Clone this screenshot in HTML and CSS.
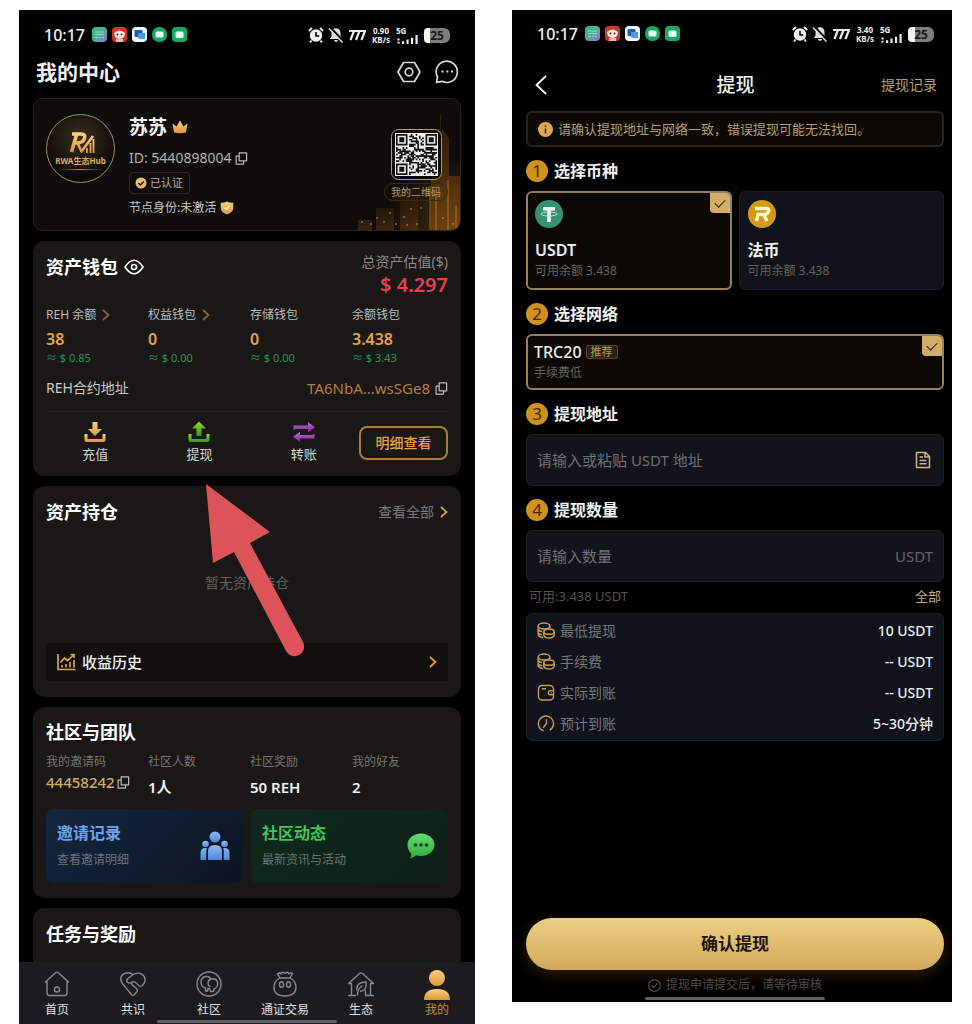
FILE: index.html
```html
<!DOCTYPE html>
<html lang="zh-CN">
<head>
    <meta charset="UTF-8">
    <meta name="viewport" content="width=device-width, initial-scale=1.0">
    <title>提现教程</title>
    <link rel="stylesheet" href="styles.css">
</head>
<body>
    <!-- 公用图标 -->
    <svg class="sprite" aria-hidden="true">
        <defs>
            <linearGradient id="gold" x1="0" y1="0" x2="0" y2="1">
                <stop offset="0" stop-color="#fbd07e"/><stop offset="1" stop-color="#dc963a"/>
            </linearGradient>
            <linearGradient id="lime" x1="0" y1="0" x2="0" y2="1">
                <stop offset="0" stop-color="#8fdc1c"/><stop offset="1" stop-color="#3f8f2e"/>
            </linearGradient>
            <linearGradient id="purple" x1="0" y1="0" x2="0" y2="1">
                <stop offset="0" stop-color="#b86bd0"/><stop offset="1" stop-color="#8a1fa8"/>
            </linearGradient>
            <linearGradient id="blue" x1="0" y1="0" x2="0" y2="1">
                <stop offset="0" stop-color="#8fbcf8"/><stop offset="1" stop-color="#4d86dc"/>
            </linearGradient>
            <linearGradient id="green" x1="0" y1="0" x2="0" y2="1">
                <stop offset="0" stop-color="#62dd6c"/><stop offset="1" stop-color="#2fae3f"/>
            </linearGradient>
            <linearGradient id="app" x1="0" y1="0" x2="1" y2="1">
                <stop offset="0" stop-color="#2fbf7c"/><stop offset=".5" stop-color="#4fae9a"/><stop offset="1" stop-color="#a06ad8"/>
            </linearGradient>
        </defs>
        <symbol id="i-apps" viewBox="0 0 95 16">
            <rect x="0" y="0" width="15" height="15" rx="4" fill="url(#app)"/>
            <path d="M3 5h9M3 7.5h9M3 10.5h3M7 10.5h2M10 10.5h2" stroke="#c9f3e4" stroke-width="1.2" opacity=".6"/>
            <rect x="20" y="0" width="15" height="15" rx="4" fill="#d5342b"/>
            <path d="M22 6q5.5-5 11 0l-1 4q-4.5 4-9 0z" fill="#fff0e4"/>
            <circle cx="25.5" cy="7.5" r="1" fill="#6b1a14"/><circle cx="29.5" cy="7.5" r="1" fill="#6b1a14"/>
            <path d="M24 12h7v3h-7z" fill="#f4b9a6"/>
            <rect x="40" y="0" width="15" height="15" rx="4" fill="#f4f8fc"/>
            <rect x="42.5" y="3" width="8" height="7" rx="1" fill="#1c5fae"/>
            <path d="M46 6h7v6h-5l-2-1z" fill="#4d9be0"/>
            <rect x="60" y="0" width="15" height="15" rx="7" fill="#17a862"/>
            <rect x="63.5" y="4.5" width="8" height="6" rx="1.5" fill="#eafff3"/>
            <rect x="80" y="0" width="15" height="15" rx="4" fill="#17a862"/>
            <rect x="83.5" y="4.5" width="8" height="6.5" rx="1.5" fill="#eafff3"/>
        </symbol>
        <symbol id="i-alarm" viewBox="0 0 16 16">
            <circle cx="8" cy="8.5" r="6.2" fill="#eee"/>
            <path d="M.8 4L4 1M15.2 4L12 1M3.5 13.5l-1.5 2M12.5 13.5l1.5 2" stroke="#eee" stroke-width="1.8"/>
            <path d="M8 5v4h3.2" fill="none" stroke="#000" stroke-width="1.6"/>
        </symbol>
        <symbol id="i-mute" viewBox="0 0 16 16">
            <path d="M8 1.2c3 0 4.5 2 4.5 5v3.3l1.8 2.5H1.7l1.8-2.5V6.2c0-3 1.5-5 4.5-5zM6 13h4q-.5 2-2 2t-2-2z" fill="#ddd"/>
            <path d="M2.5.5l13 14" stroke="#000" stroke-width="2"/>
            <path d="M1 1.5l13.5 14" stroke="#ddd" stroke-width="1.5"/>
        </symbol>
        <symbol id="i-fast" viewBox="0 0 18 12">
            <path d="M1 2h5L2.5 11M6.5 2h5L8 11M12 2h5l-3.5 9" fill="none" stroke="#eee" stroke-width="2.2"/>
        </symbol>
        <symbol id="i-bars" viewBox="0 0 24 10">
            <path d="M1.5 4v2M1.5 7.5v2M6.5 7v3M11.5 5v5M16.5 3v7M21.5 0v10" stroke="#eee" stroke-width="2.4"/>
        </symbol>
        <symbol id="i-copy" viewBox="0 0 14 14">
            <path d="M4.5 1h8v8.5h-8zM4.5 4.5H1.2V13h8V9.5" fill="none" stroke="currentColor" stroke-width="1.3" stroke-linejoin="round"/>
        </symbol>
        <symbol id="i-next" viewBox="0 0 8 14">
            <path d="M1 2l5.5 5L1 12" fill="none" stroke="currentColor" stroke-width="1.7"/>
        </symbol>
        <symbol id="i-coins" viewBox="0 0 18 17">
            <ellipse cx="7" cy="4" rx="5.8" ry="3"/>
            <path d="M1.2 4v9q1.2 2.5 5 2.5M1.2 7.5q1.2 2 4 2M1.2 11q1.2 1.7 4 1.7M12.8 4v2.5"/>
            <ellipse cx="12" cy="9.7" rx="5.2" ry="2.6"/>
            <path d="M6.8 9.7v3.5q1 2.8 5.2 2.8t5.2-2.8V9.7"/>
        </symbol>
    </svg>

    <main class="board">
        <!-- 左：我的中心 -->
        <section class="phone">
            <div class="status">
                <span class="time">10:17</span>
                <svg class="apps"><use href="#i-apps"/></svg>
                <div class="signals">
                    <svg class="s16"><use href="#i-alarm"/></svg>
                    <svg class="s16"><use href="#i-mute"/></svg>
                    <svg class="fast"><use href="#i-fast"/></svg>
                    <span class="speed">0.90<br>KB/s</span>
                    <span class="net">5G<svg><use href="#i-bars"/></svg></span>
                    <span class="battery">25</span>
                </div>
            </div>

            <header class="home-head">
                <h1>我的中心</h1>
                <button class="icon-btn" aria-label="设置">
                    <svg width="24" height="24" viewBox="0 0 24 24" fill="none" stroke="#d8d8d8" stroke-width="1.7" stroke-linejoin="round">
                        <path d="M6.5 2.5h11L23 12l-5.5 9.5h-11L1 12z"/><circle cx="12" cy="12" r="3.8"/>
                    </svg>
                </button>
                <button class="icon-btn" aria-label="消息">
                    <svg width="24" height="24" viewBox="0 0 24 24" fill="none" stroke="#d8d8d8" stroke-width="1.7" stroke-linejoin="round">
                        <path d="M2.5 17a10.6 10.6 0 1 1 4.5 4.3L1.5 22.3z"/>
                        <path d="M6.5 11.5h2M11.3 11.5h2M16 11.5h2" stroke-width="2.2"/>
                    </svg>
                </button>
            </header>

            <div class="stack">
                <section class="card profile">
                    <svg class="city" viewBox="0 0 130 120" aria-hidden="true">
                        <defs>
                            <linearGradient id="tower" x1="0" y1="0" x2="0" y2="1">
                                <stop offset="0" stop-color="#6a3d0c" stop-opacity=".35"/><stop offset="1" stop-color="#8a5212" stop-opacity=".6"/>
                            </linearGradient>
                            <linearGradient id="block" x1="0" y1="0" x2="0" y2="1">
                                <stop offset="0" stop-color="#4a2c0a" stop-opacity=".1"/><stop offset="1" stop-color="#7a4810" stop-opacity=".4"/>
                            </linearGradient>
                            <radialGradient id="glow" cx="1" cy="1" r="1">
                                <stop offset="0" stop-color="#8a5210" stop-opacity=".5"/><stop offset=".6" stop-color="#8a5210" stop-opacity="0"/>
                            </radialGradient>
                        </defs>
                        <rect width="130" height="120" fill="url(#glow)"/>
                        <path d="M101 120V24l12-4 6 8v92zM110 20V4h1v16zM119 120V66h11v54z" fill="url(#tower)"/>
                        <path d="M70 120V78h18v42zM46 120V98h18v22zM28 120v-10h14v10z" fill="url(#block)"/>
                        <path d="M100 120V76M118 120V70M106 120V84M126 120V96" stroke="#d99b3e" opacity=".6"/>
                        <g fill="#dd9b48" opacity=".6">
                            <circle cx="32" cy="112" r="1"/><circle cx="41" cy="114" r="1"/><circle cx="47" cy="108" r="1"/><circle cx="54" cy="112" r="1"/>
                            <circle cx="60" cy="103" r="1"/><circle cx="66" cy="114" r="1"/><circle cx="74" cy="107" r="1"/><circle cx="81" cy="99" r="1"/><circle cx="87" cy="114" r="1"/>
                            <circle cx="91" cy="98" r="1"/><circle cx="77" cy="115" r="1"/><circle cx="113" cy="108" r="1"/><circle cx="123" cy="114" r="1"/>
                        </g>
                    </svg>
                    <div class="avatar">
                        <svg viewBox="0 0 28 24" width="28" height="24" fill="none" stroke="url(#gold)" stroke-linejoin="round">
                            <path d="M5 3h9q5 0 3.500 4.500T9.500 12H6M9.500 4L4.500 21" stroke-width="3.6"/>
                            <path d="M10.5 12l4 8.500L26 5" stroke-width="2.6"/>
                            <path d="M20 17v5M23.5 12v10M26.500 8v14" stroke-width="1.8"/>
                        </svg>
                        <span>RWA生态Hub</span>
                        <i></i>
                    </div>
                    <div class="who">
                        <h2>苏苏
                            <svg width="16" height="14" viewBox="0 0 16 14"><path d="M.5 3.5l4 3L8 .5l3.5 6 4-3L14 12.5q-6 1.5-12 0z" fill="url(#gold)"/></svg>
                        </h2>
                        <p class="uid">ID: 5440898004 <svg class="copy"><use href="#i-copy"/></svg></p>
                        <span class="verified">
                            <svg width="12" height="12" viewBox="0 0 12 12"><circle cx="6" cy="6" r="5.5" fill="#edbb62"/><path d="M3.3 6l2 2 3.500-3.500" fill="none" stroke="#1d1505" stroke-width="1.5"/></svg>
                            已认证
                        </span>
                        <p class="node">节点身份:未激活
                            <svg width="14" height="14" viewBox="0 0 14 14"><path d="M7 .5q3 1.5 6.3 1.3V7q0 4-6.3 6.5Q.7 11 .7 7V1.800Q4 2 7 .5z" fill="url(#gold)"/><path d="M4.5 6.500L6.500 8.500l3.500-4" fill="none" stroke="#fff0c4" stroke-width="1.3"/></svg>
                        </p>
                    </div>
                    <div class="qr">
                        <svg id="qr" width="51" height="51" viewBox="-5 -5 51 51" role="img" aria-label="二维码"></svg>
                        <span>我的二维码</span>
                    </div>
                </section>

                <section class="card wallet">
                    <div class="wallet-head">
                        <h3>资产钱包
                            <svg width="20" height="16" viewBox="0 0 20 16" fill="none" stroke="#fff" stroke-width="1.6"><path d="M1 8q9-13.5 18 0-9 13.5-18 0z"/><circle cx="10" cy="8" r="2.5"/></svg>
                        </h3>
                        <div class="total">
                            <span>总资产估值($)</span>
                            <strong>$ 4.297</strong>
                        </div>
                    </div>
                    <div class="quad">
                        <div><span class="name">REH 余额 <svg class="next"><use href="#i-next"/></svg></span><b>38</b><em>≈ $ 0.85</em></div>
                        <div><span class="name">权益钱包 <svg class="next"><use href="#i-next"/></svg></span><b>0</b><em>≈ $ 0.00</em></div>
                        <div><span class="name">存储钱包</span><b>0</b><em>≈ $ 0.00</em></div>
                        <div><span class="name">余额钱包</span><b>3.438</b><em>≈ $ 3.43</em></div>
                    </div>
                    <div class="contract">
                        <span>REH合约地址</span>
                        <span class="addr">TA6NbA...wsSGe8</span>
                        <svg class="copy"><use href="#i-copy"/></svg>
                    </div>
                    <div class="actions">
                        <button>
                            <svg width="22" height="22" viewBox="0 0 22 22" fill="url(#gold)"><path d="M8.5 1h5v7H18l-7 7-7-7h4.500z"/><path d="M.5 13h3v5h15v-5h3v6q0 2-2 2h-17q-2 0-2-2z"/></svg>
                            充值
                        </button>
                        <button>
                            <svg width="22" height="22" viewBox="0 0 22 22" fill="url(#lime)"><path d="M11 .5l7 7h-4.500V15h-5V7.500H4z"/><path d="M.5 13h3v5h15v-5h3v6q0 2-2 2h-17q-2 0-2-2z"/></svg>
                            提现
                        </button>
                        <button>
                            <svg width="22" height="22" viewBox="0 0 22 22" fill="url(#purple)"><path d="M.5 9.500V4.500H15V1l7 5.200-7 5V8H3.500q-2 0-3 1.500z"/><path d="M21.5 12.500V17.500H7V21l-7-5.200 7-5V14h11.500q2 0 3-1.500z"/></svg>
                            转账
                        </button>
                        <button class="detail">明细查看</button>
                    </div>
                </section>

                <section class="card holdings">
                    <div class="row">
                        <h3>资产持仓</h3>
                        <a href="#" class="all">查看全部 <svg class="next"><use href="#i-next"/></svg></a>
                    </div>
                    <p class="empty">暂无资产持仓</p>
                    <a href="#" class="history">
                        <svg width="19" height="18" viewBox="0 0 19 18" fill="none" stroke="#d9a441" stroke-width="1.7"><path d="M1 1v15.500h17.500M3.500 9.500l4-4.500 3 2.500L17 1.500M13.500 1.500H17V5M5 14.500V12M9 14.500V11M13 14.500V9M17 14.500V7"/></svg>
                        收益历史
                        <svg class="next"><use href="#i-next"/></svg>
                    </a>
                    <!-- 指向“提现”的箭头 -->
                    <svg class="pointer" viewBox="0 0 100 174" aria-hidden="true">
                        <path d="M0 0l64 48-20 11 53 99a9.500 9.500 0 0 1-17 9L28 68 7 79z" fill="#dc545a"/>
                    </svg>
                </section>

                <section class="card community">
                    <h3>社区与团队</h3>
                    <div class="quad stats">
                        <div><span class="name">我的邀请码</span><b class="code">44458242<svg class="copy"><use href="#i-copy"/></svg></b></div>
                        <div><span class="name">社区人数</span><b>1人</b></div>
                        <div><span class="name">社区奖励</span><b>50 REH</b></div>
                        <div><span class="name">我的好友</span><b>2</b></div>
                    </div>
                    <div class="tiles">
                        <a href="#" class="tile invite">
                            <span><strong>邀请记录</strong>查看邀请明细</span>
                            <svg width="30" height="30" viewBox="0 0 30 30" fill="url(#blue)"><circle cx="15" cy="6" r="5.5"/><circle cx="5.5" cy="13" r="3.3"/><circle cx="24.5" cy="13" r="3.3"/><path d="M8 29V20q0-6 7-6t7 6v9zM.5 29v-7q0-4.500 4-5h2.300l-.5 3v9zM29.500 29v-7q0-4.500-4-5h-2.300l.5 3v9z"/></svg>
                        </a>
                        <a href="#" class="tile news">
                            <span><strong>社区动态</strong>最新资讯与活动</span>
                            <svg width="28" height="26" viewBox="0 0 28 26"><path d="M14 .5c7.500 0 13.500 5 13.500 11.200S21.500 23 14 23q-2.500 0-4.800-.7Q6.500 25 2.800 25.500q1.800-2 1.500-4.800Q.5 17 .5 11.700C.5 5.500 6.500.5 14 .5z" fill="url(#green)"/><g fill="#0d3a1c"><circle cx="8.500" cy="12" r="1.8"/><circle cx="14" cy="12" r="1.8"/><circle cx="19.500" cy="12" r="1.8"/></g></svg>
                        </a>
                    </div>
                </section>

                <section class="card tasks">
                    <h3>任务与奖励</h3>
                </section>
            </div>

            <nav class="tabs">
                <a href="#"><svg viewBox="0 0 26 26"><path d="M1 11.500L11.500 1.700q1.500-1.200 3 0L25 11.500M3 9.800V22q0 2.500 2.500 2.500h15Q23 24.500 23 22V9.800"/><circle cx="13" cy="18.500" r="2.5"/></svg>首页</a>
                <a href="#"><svg viewBox="0 0 26 26"><path d="M13 3.500Q9 .5 4.500 2.500T1 9.500q.5 2.500 3 5l7.500 9q1.500 1.500 3 0l2.500-3q1-1.500-.5-3l-4.500-4q-1-1.500.5-2.500t3 .5l4 3.500q1.500 1 3-.5l1.500-2q2.500-5-1-8.500T13 3.500L7.500 8q-1.500 2 .5 3.500t4-.5"/></svg>共识</a>
                <a href="#"><svg viewBox="0 0 26 26"><circle cx="13" cy="13" r="12"/><path d="M9.500 20v-3q-4-1-4.500-5.500Q5 6.500 9.500 5.500q4.500-.5 5.500 2.500 5.500-1 6.500 3.500t-3.500 6.500l-.5 2.500h-3l-1-3h-1.500l-.5 2.500zM15 8q-4 1.500-2.500 6.500l2 1"/></svg>社区</a>
                <a href="#"><svg viewBox="0 0 26 26"><path d="M8 7L5.500 2.500q2-1 3.500.3 1-2 2.500-1.300l1.500 1 1.500-1q1.500-.7 2.500 1.300 1.500-1.300 3.500-.3L18 7M7.500 7h11q5.500 3.500 5.500 9 0 9-11 9T2 16q0-5.500 5.500-9z"/><ellipse cx="9.500" cy="13.500" rx="2" ry="2.800"/><ellipse cx="16.500" cy="13.500" rx="2" ry="2.800"/></svg>通证交易</a>
                <a href="#"><svg viewBox="0 0 26 26"><path d="M3.500 24.500V12.500H.5L11.500 2.500q1.500-1.200 3 0l11 10h-3v12M0 24.500h8M17 24.500h9M9.500 24.500q-.5-6 5-10M9 19.500q-1.500-8 9-8.500 1 9-6 9.500M17.500 24.500V19"/></svg>生态</a>
                <a href="#" class="active"><svg viewBox="0 0 26 30"><circle cx="13" cy="8" r="8"/><path d="M0 30q0-11 13-11t13 11z"/></svg>我的</a>
                <i class="home-bar"></i>
            </nav>
        </section>

        <!-- 右：提现 -->
        <section class="phone withdraw">
            <div class="status">
                <span class="time">10:17</span>
                <svg class="apps"><use href="#i-apps"/></svg>
                <div class="signals">
                    <svg class="s16"><use href="#i-alarm"/></svg>
                    <svg class="s16"><use href="#i-mute"/></svg>
                    <svg class="fast"><use href="#i-fast"/></svg>
                    <span class="speed">3.40<br>KB/s</span>
                    <span class="net">5G<svg><use href="#i-bars"/></svg></span>
                    <span class="battery">25</span>
                </div>
            </div>

            <header class="page-head">
                <button class="icon-btn" aria-label="返回"><svg width="14" height="20" viewBox="0 0 14 20" fill="none" stroke="#fff" stroke-width="1.8"><path d="M12 1L2.500 10l9.500 9"/></svg></button>
                <h1>提现</h1>
                <a href="#">提现记录</a>
            </header>

            <form class="form">
                <p class="notice">
                    <svg width="15" height="15" viewBox="0 0 15 15"><circle cx="7.500" cy="7.500" r="7.500" fill="#dca950"/><path d="M7.500 6.500v5M7.500 3.500v1.700" stroke="#5a3a08" stroke-width="1.7"/></svg>
                    请确认提现地址与网络一致，错误提现可能无法找回。
                </p>

                <h2 class="step"><i>1</i>选择币种</h2>
                <div class="coins">
                    <label class="option">
                        <input type="radio" name="coin" checked>
                        <svg width="28" height="28" viewBox="0 0 28 28"><circle cx="14" cy="14" r="14" fill="#35946f"/><path d="M8 7h12v3.500h-4.200V22h-3.600V10.500H8z" fill="#fff"/><ellipse cx="14" cy="14" rx="8" ry="2" fill="none" stroke="#bfe6d6"/></svg>
                        <strong>USDT</strong>
                        <small>可用余额 3.438</small>
                    </label>
                    <label class="option">
                        <input type="radio" name="coin">
                        <svg width="28" height="28" viewBox="0 0 28 28"><circle cx="14" cy="14" r="14" fill="#d39a18"/><path d="M7 8.500h11q3.500 0 2.500 3t-4.500 3H10M15.500 14.500l3.500 6.500M10.500 13L8.500 21" fill="none" stroke="#fff8cf" stroke-width="3.4"/></svg>
                        <strong>法币</strong>
                        <small>可用余额 3.438</small>
                    </label>
                </div>

                <h2 class="step"><i>2</i>选择网络</h2>
                <label class="option network">
                    <input type="radio" name="network" checked>
                    <strong>TRC20 <mark>推荐</mark></strong>
                    <small>手续费低</small>
                </label>

                <h2 class="step"><i>3</i><label for="address">提现地址</label></h2>
                <div class="field">
                    <input type="text" id="address" placeholder="请输入或粘贴 USDT 地址">
                    <button type="button" class="icon-btn" aria-label="粘贴"><svg width="16" height="18" viewBox="0 0 16 18" fill="none" stroke="#cdb488" stroke-width="1.5" stroke-linejoin="round"><path d="M1.500 1.500h9l4 4v11h-13zM10 1.500V6h4.500M4.500 6H8M4.500 9.500h7M4.500 12.800h7"/></svg></button>
                </div>

                <h2 class="step"><i>4</i><label for="amount">提现数量</label></h2>
                <div class="field">
                    <input type="text" id="amount" placeholder="请输入数量">
                    <span>USDT</span>
                </div>
                <div class="avail">
                    <span>可用:3.438 USDT</span>
                    <button type="button">全部</button>
                </div>

                <dl class="summary">
                    <div><dt><svg><use href="#i-coins"/></svg>最低提现</dt><dd>10 USDT</dd></div>
                    <div><dt><svg><use href="#i-coins"/></svg>手续费</dt><dd>-- USDT</dd></div>
                    <div><dt><svg viewBox="0 0 18 18"><rect x="1" y="1.5" width="16" height="15.5" rx="4"/><path d="M4.500 5H9M17 7h-3.500q-2 0-2 2.200t2 2.200H17M14 9.200h1"/></svg>实际到账</dt><dd>-- USDT</dd></div>
                    <div><dt><svg viewBox="0 0 18 18"><path d="M6.500 16.700A8 8 0 1 1 13 16M9.500 4.500V9L6 13.500"/></svg>预计到账</dt><dd>5~30分钟</dd></div>
                </dl>

                <button type="button" class="submit">确认提现</button>
                <p class="tip">
                    <svg width="13" height="13" viewBox="0 0 13 13" fill="none" stroke="#555" stroke-width="1.1"><circle cx="6.500" cy="6.500" r="5.8"/><path d="M3.800 6.500l2 2 3.500-3.800"/></svg>
                    提现申请提交后，请等待审核
                </p>
                <i class="home-bar"></i>
            </form>
        </section>
    </main>

    <script>
        // 二维码：三个定位角 + 伪随机模块
        const size = 25;
        const unit = 41 / size;
        let seed = 7;

        function finder(x, y, cx, cy) {
            const d = Math.max(Math.abs(x - cx), Math.abs(y - cy));
            if (d > 4) return null;
            return d !== 2 && d !== 4;
        }

        let d = '';
        for (let y = 0; y < size; y++) {
            for (let x = 0; x < size; x++) {
                seed = (seed * 1103515245 + 12345) % 2147483648;
                let dark = seed / 2147483648 > 0.45;
                for (const c of [[3, 3], [size - 4, 3], [3, size - 4]]) {
                    const f = finder(x, y, c[0], c[1]);
                    if (f !== null) dark = f;
                }
                if (dark) d += `M${x * unit} ${y * unit}h${unit}v${unit}h${-unit}z`;
            }
        }
        document.getElementById('qr').innerHTML =
            '<rect x="-4.5" y="-4.5" width="50" height="50" rx="7" fill="#0b0906" stroke="#b39a70"/>' +
            '<rect x="-1" y="-1" width="43" height="43" fill="#eee"/><path d="' + d + '" fill="#111"/>';
    </script>
</body>
</html>
```
FILE: styles.css
```css
* {
    margin: 0;
    padding: 0;
    box-sizing: border-box;
}

body {
    background: #fff;
    color: #f2f2f2;
    font-family: "Noto Sans", "Noto Sans CJK SC", sans-serif;
    font-size: 14px;
    line-height: 20px;
}

a {
    color: inherit;
    text-decoration: none;
}

button {
    background: none;
    border: none;
    color: inherit;
    font: inherit;
    cursor: pointer;
}

svg {
    flex: none;
}

i, em {
    font-style: normal;
}

.sprite {
    position: absolute;
    width: 0;
    height: 0;
}

.board {
    display: grid;
    grid-template-columns: 456fr 440fr;
    gap: 37px;
    padding: 10px 20px 0 19px;
}

.phone {
    display: flex;
    flex-direction: column;
    background: #000;
    min-width: 0;
}

.withdraw {
    margin-bottom: 22px;
}

/* 状态栏 */
.status {
    display: flex;
    align-items: center;
    height: 50px;
    padding: 0 25px;
}

.withdraw .status {
    height: 48px;
    padding-right: 18px;
}

.time {
    font-size: 16px;
    font-weight: 500;
    margin-right: 7px;
}

.apps {
    width: 95px;
    height: 16px;
}

.signals {
    display: flex;
    align-items: center;
    gap: 4px;
    margin-left: auto;
}

.s16 {
    width: 16px;
    height: 16px;
}

.fast {
    width: 18px;
    height: 12px;
}

.speed {
    font-size: 8px;
    line-height: 9px;
    font-weight: 700;
    text-align: center;
    margin: 0 2px;
}

.net {
    display: flex;
    flex-direction: column;
    font-size: 8px;
    line-height: 8px;
    font-weight: 700;
}

.net svg {
    width: 24px;
    height: 9px;
}

.battery {
    width: 26px;
    height: 15px;
    border-radius: 4px 6px 6px 4px;
    background: linear-gradient(90deg, #f4f4f4 25%, #7d7d7d 25%);
    color: #1a1a1a;
    font-size: 12px;
    line-height: 15px;
    font-weight: 700;
    text-align: center;
}

.icon-btn {
    display: flex;
}

/* 我的中心 */
.home-head {
    display: flex;
    align-items: center;
    gap: 14px;
    height: 24px;
    padding: 0 16px 0 17px;
}

.home-head h1 {
    flex: 1;
    font-size: 21px;
    font-weight: 600;
}

.stack {
    display: flex;
    flex-direction: column;
    gap: 10px;
    padding: 14px 14px 0;
}

.card {
    position: relative;
    background: #191817;
    border-radius: 12px;
    padding: 14px 13px;
}

h3 {
    display: flex;
    align-items: center;
    gap: 6px;
    font-size: 18px;
    line-height: 24px;
    font-weight: 600;
    color: #fff;
}

.copy {
    width: 13px;
    height: 13px;
    color: #bbb;
}

.next {
    width: 8px;
    height: 14px;
    color: #d9a441;
}

.profile {
    display: flex;
    background: #0e0d0b;
    border: 1px solid #29231a;
    border-radius: 10px;
    overflow: hidden;
    height: 133px;
    padding: 15px 12px;
}

.city {
    position: absolute;
    right: 0;
    bottom: 0;
    width: 130px;
    height: 120px;
}

.avatar {
    display: flex;
    flex-direction: column;
    align-items: center;
    width: 69px;
    height: 69px;
    padding-top: 16px;
    border: 1px solid #9b8a66;
    border-radius: 50%;
    background: radial-gradient(circle at 50% 35%, #3a3020, #0d0a06 70%);
}

.avatar span {
    color: #d9ab6a;
    font-size: 8px;
    line-height: 11px;
    font-weight: 700;
    white-space: nowrap;
}

.avatar i {
    width: 44px;
    height: 1px;
    margin-top: 3px;
    background: linear-gradient(90deg, transparent, #c98a3a, transparent);
}

.who {
    flex: 1;
    padding-left: 14px;
}

.who h2 {
    display: flex;
    align-items: center;
    gap: 5px;
    font-size: 19px;
    line-height: 26px;
    font-weight: 700;
}

.uid {
    display: flex;
    align-items: center;
    gap: 4px;
    margin-top: 8px;
    color: #b5b2ac;
}

.verified {
    display: inline-flex;
    align-items: center;
    gap: 3px;
    margin-top: 4px;
    padding: 0 6px 0 5px;
    border: 1px solid #2b2822;
    border-radius: 4px;
    color: #bcae94;
    font-size: 11px;
}

.node {
    display: flex;
    align-items: center;
    gap: 4px;
    margin-top: 4px;
    color: #c8c6c2;
    font-size: 12px;
}

.qr {
    position: relative;
    display: flex;
    flex-direction: column;
    align-items: center;
    padding-top: 15px;
}

.qr span {
    margin-top: 3px;
    padding: 0 6px;
    border: 1px solid #3a2a14;
    border-radius: 9px;
    color: #b09a74;
    font-size: 10px;
    line-height: 16px;
}

.wallet {
    padding-bottom: 12px;
}

.wallet-head {
    display: flex;
    align-items: flex-start;
    justify-content: space-between;
}

.total {
    display: flex;
    flex-direction: column;
    align-items: flex-end;
    margin-top: -3px;
    color: #8c8a88;
}

.total strong {
    color: #e5404d;
    font-size: 20px;
    line-height: 26px;
    font-weight: 600;
}

.quad {
    display: grid;
    grid-template-columns: repeat(4, 1fr);
    gap: 6px;
    margin-top: 7px;
}

.quad > div {
    display: flex;
    flex-direction: column;
}

.name {
    display: flex;
    align-items: center;
    gap: 6px;
    color: #bdbbb8;
    font-size: 12px;
    white-space: nowrap;
}

.quad .next {
    color: #8a6a30;
}

.quad b {
    margin-top: 3px;
    color: #e6a24a;
    font-size: 16px;
    line-height: 22px;
    font-weight: 600;
}

.quad em {
    color: #259a50;
    font-size: 11px;
    line-height: 16px;
}

.contract {
    display: flex;
    align-items: center;
    gap: 5px;
    margin-top: 12px;
    padding-bottom: 13px;
    border-bottom: 1px solid #242220;
    color: #cccac7;
}

.addr {
    margin-left: auto;
    color: #b87d40;
    font-size: 15px;
}

.actions {
    display: grid;
    grid-template-columns: repeat(3, 1fr) 89px;
    gap: 6px;
    align-items: center;
    margin-top: 9px;
}

.actions button {
    display: flex;
    flex-direction: column;
    align-items: center;
    gap: 1px;
    color: #d6d4d1;
    font-size: 13px;
}

.actions .detail {
    height: 34px;
    justify-content: center;
    border: 2px solid #ad7b38;
    border-radius: 8px;
    color: #e0a04c;
    font-size: 14px;
    font-weight: 500;
}

.holdings {
    padding-bottom: 16px;
}

.row {
    display: flex;
    align-items: center;
    justify-content: space-between;
}

.all {
    display: flex;
    align-items: center;
    gap: 6px;
    color: #7b7977;
}

.empty {
    padding: 49px 0 50px;
    color: #626160;
    text-align: center;
}

.history {
    display: flex;
    align-items: center;
    gap: 6px;
    height: 38px;
    padding: 0 11px;
    background: #11100e;
    font-size: 15px;
    font-weight: 500;
}

.history .next {
    margin-left: auto;
}

.pointer {
    position: absolute;
    left: 173px;
    top: -2px;
    width: 100px;
    height: 174px;
}

.community {
    padding-top: 13px;
    padding-bottom: 15px;
}

.stats {
    margin-top: 9px;
}

.stats b {
    margin-top: 5px;
    color: #f2f2f2;
    font-size: 15px;
    font-weight: 600;
}

.stats .name {
    color: #767472;
    line-height: 18px;
}

.stats .code {
    display: flex;
    align-items: center;
    gap: 2px;
    margin-top: 0;
    color: #cfae62;
    font-weight: 500;
}

.tiles {
    display: grid;
    grid-template-columns: 1fr 1fr;
    gap: 8px;
    margin-top: 11px;
}

.tile {
    display: flex;
    align-items: center;
    justify-content: space-between;
    height: 74px;
    padding: 0 13px 0 11px;
    border-radius: 8px;
    color: #6e7377;
    font-size: 12px;
}

.tile strong {
    display: block;
    margin-bottom: 6px;
    font-size: 16px;
    line-height: 22px;
    font-weight: 600;
}

.invite {
    background: linear-gradient(135deg, #14263f, #0d1422);
}

.invite strong {
    color: #6ca4ee;
}

.news {
    background: linear-gradient(135deg, #0e2a1d, #0e1f17);
}

.news strong {
    color: #40c45a;
}

.tasks {
    padding: 14px 13px 16px;
    border-radius: 12px 12px 0 0;
}

.tabs {
    position: relative;
    display: grid;
    grid-template-columns: repeat(6, 1fr);
    height: 62px;
    padding-top: 8px;
    background: #1c1b1e;
}

.tabs a {
    display: flex;
    flex-direction: column;
    align-items: center;
    gap: 2px;
    color: #e0e0e0;
    font-size: 12px;
}

.tabs svg {
    width: 26px;
    height: 28px;
    fill: none;
    stroke: #8b898c;
    stroke-width: 1.4;
}

.tabs .active {
    color: #c48c3c;
}

.tabs .active svg {
    height: 30px;
    margin-bottom: -2px;
    fill: url(#gold);
    stroke: none;
}

.home-bar {
    width: 180px;
    height: 3px;
    border-radius: 2px;
    background: #626064;
}

.tabs .home-bar {
    position: absolute;
    left: 50%;
    bottom: 1px;
    margin-left: -90px;
}

/* 提现 */
.page-head {
    display: grid;
    grid-template-columns: 1fr auto 1fr;
    align-items: center;
    height: 53px;
    padding: 0 15px 0 22px;
}

.page-head h1 {
    font-size: 19px;
    font-weight: 500;
}

.page-head a {
    justify-self: end;
    color: #b59c74;
}

.form {
    display: flex;
    flex: 1;
    flex-direction: column;
    padding: 0 8px 0 14px;
}

.notice {
    display: flex;
    align-items: center;
    gap: 5px;
    height: 36px;
    padding: 0 10px;
    border: 2px solid #282520;
    border-radius: 6px;
    background: #0c0905;
    color: #b59a70;
    font-size: 13px;
}

.step {
    display: flex;
    align-items: center;
    gap: 6px;
    margin: 12px 0 8px;
    font-size: 16px;
    line-height: 24px;
    font-weight: 600;
}

.step i {
    width: 22px;
    height: 22px;
    border-radius: 50%;
    background: #d0921a;
    color: #4a2508;
    font-size: 17px;
    line-height: 22px;
    font-weight: 400;
    text-align: center;
}

.coins {
    display: grid;
    grid-template-columns: 1fr 1fr;
    gap: 7px;
}

.option {
    position: relative;
    display: flex;
    flex-direction: column;
    padding: 8px;
    border: 1px solid #1b1e24;
    border-radius: 6px;
    background: #10131b;
    overflow: hidden;
}

.option:has(:checked) {
    border: 2px solid #95805f;
    padding: 7px;
    background: #0c0905;
}

.option strong {
    display: flex;
    align-items: center;
    gap: 4px;
    font-size: 16px;
    line-height: 22px;
    font-weight: 600;
}

.coins strong {
    margin-top: 11px;
}

.option small {
    color: #63615e;
    font-size: 12px;
    line-height: 20px;
}

.network strong {
    font-weight: 500;
}

.option:has(:checked).network {
    padding: 5px 6px;
}

.option mark {
    padding: 0 4px;
    border: 1px solid #54452a;
    border-radius: 2px;
    background: #2a2315;
    color: #b99a58;
    font-size: 11px;
    line-height: 12px;
    font-weight: 400;
}

.option input {
    appearance: none;
    position: absolute;
    top: 0;
    right: 0;
    width: 20px;
    height: 20px;
}

.option input:checked {
    border-radius: 0 0 0 4px;
    background: #d3ae68;
}

.option input:checked::after {
    content: "";
    position: absolute;
    left: 5px;
    top: 6px;
    width: 9px;
    height: 5px;
    border: solid #2e210c;
    border-width: 0 0 1px 1px;
    transform: rotate(-45deg);
}

.field {
    display: flex;
    align-items: center;
    height: 52px;
    padding: 0 10px;
    border: 1px solid #1d1e22;
    border-radius: 6px;
    background: #11141b;
    color: #63646a;
    font-size: 15px;
}

.field input {
    flex: 1;
    min-width: 0;
    background: none;
    border: none;
    outline: none;
    color: #f2f2f2;
    font: inherit;
}

.field input::placeholder {
    color: #6f7076;
}

.field .icon-btn {
    margin-right: 2px;
}

.avail {
    display: flex;
    justify-content: space-between;
    margin-top: 4px;
    padding: 0 3px;
    color: #55534f;
    font-size: 13px;
}

.avail button {
    color: #c4ab80;
}

.summary {
    margin-top: 7px;
    padding: 1px 10px;
    border: 1px solid #1a1d22;
    border-radius: 6px;
    background: #10131b;
}

.summary div {
    display: flex;
    align-items: center;
    justify-content: space-between;
    height: 31px;
}

.summary dt {
    display: flex;
    align-items: center;
    gap: 5px;
    color: #77787c;
}

.summary dt svg {
    width: 18px;
    height: 17px;
    fill: none;
    stroke: #c59a50;
    stroke-width: 1.5;
}

.summary dd {
    color: #eceef2;
    font-weight: 500;
}

.submit {
    height: 52px;
    margin-top: auto;
    border-radius: 26px;
    background: linear-gradient(#ecd083, #d3a95c);
    box-shadow: 0 4px 14px rgba(200, 150, 50, 0.22);
    color: #1d1405;
    font-size: 17px;
    font-weight: 600;
}

.tip {
    display: flex;
    align-items: center;
    justify-content: center;
    gap: 5px;
    margin-top: 5px;
    color: #4b4a47;
    font-size: 12px;
}

.withdraw .home-bar {
    align-self: center;
    margin: 2px 0;
}
```
